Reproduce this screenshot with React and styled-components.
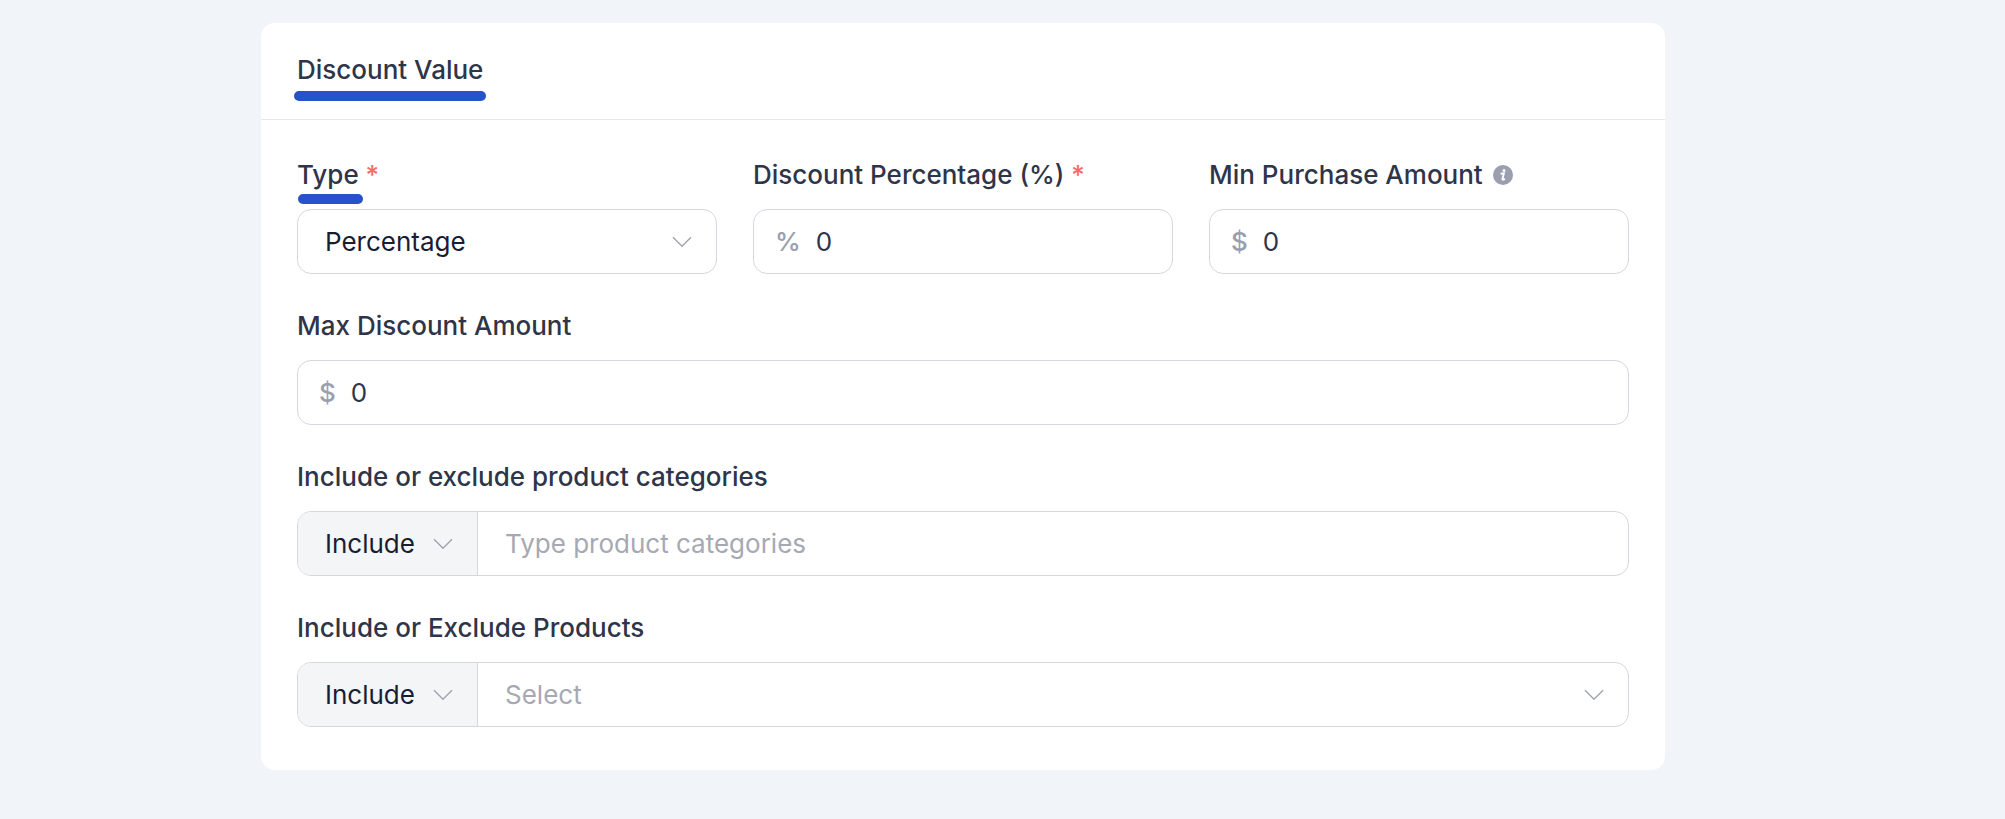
import React from "react";
import styled, { createGlobalStyle, css } from "styled-components";

const GlobalStyle = createGlobalStyle`
  *, *::before, *::after { box-sizing: border-box; }
  body {
    margin: 0;
    background: #f1f5fa;
    color: #2f3549;
    font-family: Inter, "Liberation Sans", sans-serif;
    font-size: 26px;
    line-height: 36px;
  }
`;

const Page = styled.main`
  min-height: 100vh;
  padding: 23px 340px 40px 261px;
`;

const Card = styled.form`
  background: #fff;
  border-radius: 14px;
`;

const CardHeader = styled.header`
  display: flex;
  padding: 29px 36px 31px;
  border-bottom: 1px solid #e7e8ec;
`;

const marker = css`
  position: relative;

  &::after {
    content: "";
    position: absolute;
    height: 10px;
    border-radius: 5px;
    background: #2653c9;
  }
`;

const Title = styled.h2`
  ${marker}
  margin: 0;
  font-size: 26px;
  font-weight: 500;

  &::after {
    bottom: -13px;
    left: -3px;
    right: -3px;
  }
`;

const Marked = styled.span`
  ${marker}

  &::after {
    bottom: -14px;
    left: 1px;
    right: -4px;
  }
`;

const Fields = styled.div`
  display: flex;
  flex-direction: column;
  gap: 34px;
  padding: 37px 36px 43px;
`;

const Columns = styled.div`
  display: grid;
  grid-template-columns: repeat(3, minmax(0, 1fr));
  gap: 36px;
`;

const Field = styled.div`
  display: flex;
  flex-direction: column;
  gap: 16px;
`;

const LabelRow = styled.div`
  display: flex;
  align-items: center;
  gap: 10px;
`;

const Label = styled.label`
  font-weight: 500;
`;

const Required = styled.span`
  color: #f76a66;
`;

const InfoButton = styled.button`
  display: flex;
  padding: 0;
  border: 0;
  background: none;
`;

const Control = styled.div`
  display: flex;
  height: 65px;
  overflow: hidden;
  border: 1px solid #d5d7e0;
  border-radius: 14px;
  background: #fff;
`;

const Prefix = styled.span`
  display: flex;
  align-items: center;
  padding-left: 21px;
  color: #9a9eae;
  font-weight: 500;
`;

const Input = styled.input`
  flex: 1;
  min-width: 0;
  padding: 0 ${(p) => (p.$prefixed ? 15 : 27)}px;
  border: 0;
  outline: 0;
  background: none;
  color: #2f3549;
  font: inherit;

  &::placeholder {
    color: #a6a9b2;
    opacity: 1;
  }
`;

const SelectBox = styled.div`
  display: grid;
  flex: ${(p) => (p.$addon ? "0 0 180px" : "1")};
  align-items: center;
  background: ${(p) => (p.$addon ? "#f4f5f7" : "none")};
  border-right: ${(p) => (p.$addon ? "1px solid #d5d7e0" : "0")};
`;

const Select = styled.select`
  grid-area: 1 / 1;
  width: 100%;
  height: 100%;
  padding: 0 27px;
  border: 0;
  outline: 0;
  appearance: none;
  background: none;
  color: ${(p) => (p.$empty ? "#a6a9b2" : "#191d33")};
  font: inherit;
`;

const ChevronIcon = styled.svg`
  grid-area: 1 / 1;
  justify-self: end;
  margin-right: 24px;
  pointer-events: none;
`;

function Chevron() {
  return (
    <ChevronIcon width="20" height="12" viewBox="0 0 20 12" fill="none" stroke="#a3a6b0" strokeWidth="1.5" aria-hidden="true">
      <path d="M1 1.3 10 10.2 19 1.3" />
    </ChevronIcon>
  );
}

function InfoIcon() {
  return (
    <svg width="20" height="20" viewBox="0 0 20 20" aria-hidden="true">
      <circle cx="10" cy="10" r="10" fill="#9a9eae" />
      <circle cx="11" cy="5.6" r="1.5" fill="#fff" />
      <path d="M7.6 8.8 10.9 8.4 9.4 13.9Q9.1 15.4 11.9 13.9" fill="none" stroke="#fff" strokeWidth="1.9" />
    </svg>
  );
}

function Dropdown({ id, label, option, addon, empty }) {
  return (
    <SelectBox $addon={addon}>
      <Select id={id} aria-label={label} $empty={empty} defaultValue={option}>
        <option value={option}>{option}</option>
      </Select>
      <Chevron />
    </SelectBox>
  );
}

function FormField({ id, label, marked, required, info, children }) {
  return (
    <Field>
      <LabelRow>
        <Label htmlFor={id}>
          {marked ? <Marked>{label}</Marked> : label}
          {required && <Required> *</Required>}
        </Label>
        {info && (
          <InfoButton type="button" aria-label={`About ${label}`}>
            <InfoIcon />
          </InfoButton>
        )}
      </LabelRow>
      <Control>{children}</Control>
    </Field>
  );
}

function AmountField({ id, unit, ...field }) {
  return (
    <FormField id={id} {...field}>
      <Prefix>{unit}</Prefix>
      <Input id={id} type="text" inputMode="decimal" defaultValue="0" $prefixed />
    </FormField>
  );
}

export default function App() {
  return (
    <>
      <GlobalStyle />
      <Page>
        <Card>
          <CardHeader>
            <Title>Discount Value</Title>
          </CardHeader>
          <Fields>
            <Columns>
              <FormField id="type" label="Type" marked required>
                <Dropdown id="type" option="Percentage" />
              </FormField>
              <AmountField id="percentage" label="Discount Percentage (%)" unit="%" required />
              <AmountField id="min-purchase" label="Min Purchase Amount" unit="$" info />
            </Columns>
            <AmountField id="max-discount" label="Max Discount Amount" unit="$" />
            <FormField id="categories" label="Include or exclude product categories">
              <Dropdown label="Category rule" option="Include" addon />
              <Input id="categories" type="text" placeholder="Type product categories" />
            </FormField>
            <FormField id="products" label="Include or Exclude Products">
              <Dropdown label="Product rule" option="Include" addon />
              <Dropdown id="products" option="Select" empty />
            </FormField>
          </Fields>
        </Card>
      </Page>
    </>
  );
}
